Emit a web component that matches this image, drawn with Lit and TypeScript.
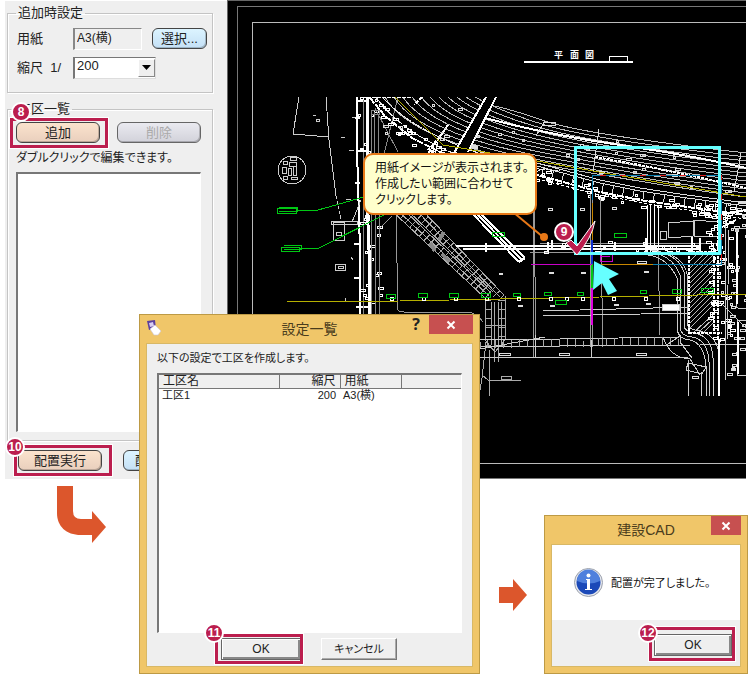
import { LitElement, html, svg, css } from "lit";
import { customElement, property } from "lit/decorators.js";

type Pt = [number, number];

const line = (pts: Pt[]) => "M" + pts.map((p) => p.join(" ")).join("L");

/** Point on a polyline at fraction t of its length, with its normal. */
const along = (pts: Pt[], t: number) => {
  const lens = pts.slice(1).map((p, i) => Math.hypot(p[0] - pts[i][0], p[1] - pts[i][1]));
  let d = t * lens.reduce((a, b) => a + b, 0);
  let i = 0;
  while (i < lens.length - 1 && d > lens[i]) d -= lens[i++];
  const [a, b] = [pts[i], pts[i + 1]];
  const ux = (b[0] - a[0]) / lens[i];
  const uy = (b[1] - a[1]) / lens[i];
  return { x: a[0] + ux * d, y: a[1] + uy * d, nx: -uy, ny: ux };
};

/** Ticks drawn at a right angle to a polyline. */
const ticks = (pts: Pt[], n: number, from: number, to: number) => {
  let d = "";
  for (let i = 0; i <= n; i++) {
    const p = along(pts, i / n);
    d += `M${(p.x + p.nx * from).toFixed(1)} ${(p.y + p.ny * from).toFixed(1)}L${(p.x + p.nx * to).toFixed(1)} ${(p.y + p.ny * to).toFixed(1)}`;
  }
  return d;
};

let seed = 7;
const rand = () => (seed = (seed * 16807) % 2147483647) / 2147483647;

/** Small survey marks scattered beside a polyline. */
const marks = (pts: Pt[], n: number, spread: number) => {
  let d = "";
  for (let i = 0; i < n; i++) {
    const p = along(pts, rand());
    const o = (rand() - 0.5) * spread;
    const x = Math.round(p.x + p.nx * o);
    const y = Math.round(p.y + p.ny * o);
    const w = 2 + Math.floor(rand() * 4);
    d += `M${x} ${y}h${w}v2h${-w}z`;
  }
  return d;
};

const boxes = (list: number[][]) => list.map(([x, y, w, h]) => `M${x} ${y}h${w}v${h}h${-w}z`).join("");

const upper = Array.from({ length: 12 }, (_, i) => {
  const sx = 484 - i * 9;
  return `M${sx} ${i ? 97 : 104}Q${sx + 24} ${108 + i * 3} 545 ${121 + i * 4}T746 ${153 + i * 4}`;
}).join("");
const mainRoad: Pt[] = [[370, 98], [385, 116], [412, 138], [440, 152], [480, 164], [537, 175], [600, 192], [640, 200], [680, 206], [746, 215]];
const diagA: Pt[] = [[391, 210], [485, 298]];
const diagB: Pt[] = [[420, 208], [504, 295]];
const bottomRoad: Pt[] = [[480, 340], [560, 339], [678, 337]];
const spine: Pt[] = [[369, 97], [369, 314]];
const hatchRight: Pt[] = [[717, 210], [719, 340]];
const greens = [
  [386, 294, 9, 4], [418, 293, 9, 4], [449, 293, 9, 4], [481, 293, 9, 4], [513, 293, 7, 3], [544, 292, 7, 3],
  [577, 292, 6, 3], [640, 290, 6, 3], [672, 289, 9, 4], [701, 288, 12, 4], [555, 300, 11, 4], [614, 233, 12, 4], [492, 232, 12, 4],
];
const posts = [392, 424, 456, 487, 519, 551, 567, 583, 614, 646, 678];

const cadDrawing = svg`
  <g fill="none" stroke="#fff" shape-rendering="crispEdges">
    <path stroke="#777" d="M746 6H237V478H746" />
    <path stroke="#bbb" d="M746 22H252V463H746" />
    <path stroke-width="2" d="M524 62H633" />
    <path d="M609 56h18v5h-18z" />
  </g>
  <text x="554" y="58" fill="#fff" class="plan">平</text>
  <text x="570" y="58" fill="#fff" class="plan">面</text>
  <text x="585" y="58" fill="#fff" class="plan">図</text>
  <clipPath id="plan-area"><rect x="270" y="97" width="476" height="300" /></clipPath>
  <g clip-path="url(#plan-area)" fill="none" stroke="#ccc" stroke-width="1" shape-rendering="crispEdges">
    <path d="M299 97L293 134L329 137M326 97L329 140L336 196" />
    <path d="M336 196L341 219" stroke-dasharray="3 2" />
    <circle cx="292" cy="170" r="14" />
    <path d=${boxes([[290, 157, 6, 3], [283, 161, 4, 3], [289, 162, 7, 4], [282, 167, 4, 6], [288, 168, 3, 7], [293, 166, 3, 9], [283, 176, 4, 3], [291, 177, 6, 2], [316, 119, 3, 2], [333, 222, 11, 18], [336, 232, 5, 3], [335, 264, 10, 6], [338, 266, 5, 2], [331, 221, 26, 3]])} />
    <path d="M313 115h3M341 137h4M346 199h5M351 257l2 3M345 298v3M352 117h5M349 150h5" />
    <g stroke="#fff">
      <path stroke-width="2" d="M357 97V150L360 250V314" />
      <path stroke-width="3" d="M367 97V200L369 250V314" />
      <path d="M357 101H368M355 183h5M354 244h5M354 278h5M356 307h12M357 151H367M355 118h5" stroke-width="2" />
      <path d="M363 97V314" stroke="#888" />
      <path d=${marks(spine, 38, 22)} />
    </g>
    <path stroke="#888" d="M371 110V314M374 110L376 314M378 112L380 314M375 108L398 152M384 154L398 97M371 110h8v4h-8" />
    <path d="M380 228L392 216M396 214L398 310Q399 312 404 312H466Q476 312 483 322" stroke="#999" />
    <path d="M352 222L361 200" />
    <path stroke="#bbb" d=${upper} />
    <path stroke="#fff" stroke-width="2" d="M485 118Q545 134 620 145T746 168" />
    <path stroke="#fff" stroke-width="2" stroke-dasharray="3 1" d="M595 157Q660 168 746 188" />
    <path stroke="#ddd" d="M599 129L593 172M741 153L734 192M545 121L536 136M544 122h11v3h-12z" />
    <path stroke="#fff" stroke-width="2" d="M411 97L360 97M448 125L425 158M440 137L428 150M422 97L414 105" stroke-dasharray="4 1" />
    <path d="M376 97Q400 132 460 156T540 170M382 97Q410 128 470 150T560 170" stroke="#eee" stroke-dasharray="12 1" />
    <path stroke="#000" stroke-width="11" d="M492 96L460 155" />
    <path stroke="#fff" stroke-width="2" d="M486 97L454 153M496 97L468 152" />
    <path stroke="#fff" stroke-width="2" d=${line(mainRoad)} stroke-dasharray="7 1" />
    <path stroke="#ddd" transform="translate(0 -9)" d=${line(mainRoad.slice(4))} />
    <path stroke="#ddd" transform="translate(0 -12)" d=${line(mainRoad.slice(4))} />
    <path stroke="#fff" stroke-dasharray="3 2" d=${line([[537, 179], [600, 195], [660, 206], [746, 219]])} />
    <path stroke="#ddd" d=${ticks(mainRoad.slice(4), 26, -9, -1)} />
    <path stroke="#fff" d=${marks(mainRoad, 95, 13)} />
    <path stroke="#ddd" d=${marks([[385, 112], [470, 130], [600, 152], [740, 185]], 34, 40)} />
    <path d="M590 194V347M592 194V347M600 197L603 347M534 195L536 357M533 195V357M658 245L660 335" stroke="#999" />
    <g stroke="#aaa">
      <path d=${line(diagA)} /><path d=${line(diagB)} />
      <path d="M395 208L489 296M416 210L500 297M404 210L490 292M407 210L493 292" />
      <path d=${ticks(diagA, 20, -9, 0)} />
      <path d=${ticks(diagB, 20, 0, 9)} />
      <path d="M442 254l8 8M430 243l5 8M444 232l-5 8" stroke-width="4" stroke="#888" />
      <path d="M485 298V340L495 352L505 340V296M491 302V345M494 302V362M498 302V362M501 302V345M485 325h20" />
      <path d=${ticks([[485, 300], [485, 345]], 5, -6, 0)} />
      <path d=${ticks([[505, 300], [505, 345]], 5, 0, 6)} />
      <path d="M486 342L482 378L480 390M489 350V396M482 375L488 380H521M501 376h10v3h-10z" />
    </g>
    <g stroke="#fff">
      <path stroke-width="2" d="M468 209L519 262M476 209L525 258M519 262L525 258M472 209L522 260" />
      <path stroke-width="2" d="M456 246H700M463 249H700" />
      <path stroke="#999" d="M540 243H720M530 252H700" />
      <path stroke-width="2" d="M486 243v9M548 242v9M552 240v10M615 242v9M646 238v14M692 236v18M700 238v16" />
      <path d=${marks([[540, 247], [720, 245]], 30, 12)} />
    </g>
    <path d="M543 311L690 307M543 316L690 313M480 347L560 346L690 345M480 357H688M480 349L545 337" stroke="#ccc" />
    <path d=${line(bottomRoad)} />
    <path d=${ticks(bottomRoad, 25, 0, 8)} stroke="#aaa" />
    <path d="M663 337Q670 358 690 359L700 375M665 346L680 336V342L692 358M688 360V396M701 372V396M535 335V357M591 340V357M688 363l18 4-4 7-16-4z" />
    <g stroke="#ccc">
      <path d="M648 252Q672 254 680 275V328Q681 336 692 337Q708 340 709 362V396" />
      <path d="M648 255Q668 258 677 278V330Q679 339 690 340Q704 343 706 366V396" />
      <path d="M650 250Q678 253 684 272V326Q685 332 695 333Q712 337 713 358V396" />
      <path d="M664 252Q684 258 687 274V325Q690 330 700 331Q718 336 719 356V396" />
      <path d="M647 205V252M650 205V252M654 204V250M658 205V250" stroke="#fff" />
    </g>
    <path d="M668 223L693 221V236L669 238zM694 220L718 222V237L694 236zM660 231h6v8h-6z" />
    <path stroke="#fff" stroke-width="2" stroke-dasharray="3 1" d="M689 252V334M714 248V334M689 333H722M688 252H714M718 200V340" />
    <path stroke="#bbb" d="M690 268L706 252M690 278L713 255M690 288L713 265M690 298L713 275M690 308L713 285M690 318L713 295M690 328L713 305M694 332L713 315M704 332L713 323M690 261L700 251M690 273L711 252M690 283L713 260M690 293L713 270M690 303L713 280M690 313L713 290M690 323L713 300M699 332L713 319" />
    <path stroke="#fff" d=${marks(hatchRight, 62, 26)} />
    <path stroke="#ddd" d=${marks([[730, 200], [738, 378]], 42, 28)} />
    <path stroke="#ccc" d="M725 222V380M729 230L727 340M746 228H742Q736 228 736 234V306Q736 309 746 309M746 320H737V375H746M718 300L746 328M700 344H746" />
    <path stroke="#fff" stroke-width="2" d="M737 232V304M738 322V374M720 214L746 210M720 228L736 220M719 340V396" />
    <path fill="#fff" d="M662 304h17v6h-17z" />
    <path stroke="#ddd" d=${boxes([[499, 353, 11, 2], [559, 353, 10, 2], [636, 353, 10, 2], [692, 376, 6, 2], [637, 261, 9, 2], [580, 208, 4, 2], [612, 207, 4, 2], [548, 208, 4, 2], [499, 273, 3, 1], [549, 272, 4, 1], [581, 272, 4, 1], [644, 271, 4, 1], [518, 305, 4, 1], [550, 305, 4, 1], [614, 304, 4, 1], [646, 303, 4, 1]])} />
  </g>
  <g fill="none" stroke-width="1" shape-rendering="crispEdges">
    <path stroke="#b5b000" d="M287 302L400 301L600 297L746 294" />
    <path stroke="#b5b000" d="M395 97L443 145L537 161L610 174L746 197" />
    <g stroke="#fff">${posts.map((x) => svg`<circle cx=${x} cy="299" r="2" />`)}</g>
    <g stroke="#00c814">
      <path d="M277 208h19v5h-19zM279 207h18v4h-18M281 247h18v4h-18zM284 245h17v4h-17M296 211L318 210L364 197M300 248L319 248L386 214" />
      <path d=${boxes(greens)} />
      <path d="M592 264V290" stroke-width="2" />
    </g>
    <path stroke="#c800c8" d="M531 264H592M600 254h12v7h-12zM600 256h10" />
    <path stroke="#e000e0" stroke-width="2" d="M592 288V325" />
    <path stroke="#0a7fb0" d="M592 175H721V264H653M592 175V200" />
    <path stroke="#e02020" stroke-dasharray="6 14" d="M600 175H721V264" />
    <path stroke="#c88600" d="M601 264H653M592 203V240" />
    <path stroke="#1030d0" d="M592 240V264" stroke-width="2" />
    <path stroke="#66ffff" stroke-width="3" d="M575 147H719V253H575z" />
  </g>
  <path fill="#66ffff" d="M594 261L619 274L609 279L617 291L608 295L602 283L593 290z" />
  <path fill="#bb1e4e" stroke="#fff" stroke-width="1" d="M566 243L571 240L577 246L595 221Q592 238 577 255z" />
`;

@customElement("step-badge")
export class StepBadge extends LitElement {
  @property() n = "";
  static styles = css`
    :host {
      box-sizing: border-box;
      display: flex;
      align-items: center;
      justify-content: center;
      width: 20px;
      height: 20px;
      border: 2px solid #fff;
      border-radius: 50%;
      background: #bb1e4e;
      color: #fff;
      font: bold 12px/16px "Liberation Sans", sans-serif;
    }
  `;
  render() {
    return html`${this.n}`;
  }
}

@customElement("app-root")
export class AppRoot extends LitElement {
  static styles = css`
    :host {
      display: block;
      background: #fff;
      color: #222;
      font: 12px/16px "Liberation Sans", "Noto Sans CJK JP", sans-serif;
      font-feature-settings: "palt";
    }
    * {
      box-sizing: border-box;
    }
    button,
    select,
    input {
      font: inherit;
      font-feature-settings: inherit;
      color: inherit;
      margin: 0;
    }
    .stage {
      position: relative;
      min-height: 674px;
      overflow: hidden;
    }
    .app {
      display: flex;
      padding: 0 2px 0 5px;
    }
    .side {
      flex: none;
      width: 222px;
      margin-top: 1px;
      padding: 4px 14px 8px 2px;
      background: #efefef;
    }
    fieldset {
      margin: 0;
      border: 1px solid #c4c4c4;
      box-shadow: inset 1px 1px #fff, 1px 1px #fff;
      padding: 0 8px;
      min-width: 0;
    }
    legend {
      margin: 0;
      padding: 0 2px;
      font-size: 13px;
    }
    .setup {
      padding-bottom: 10px;
    }
    .row {
      display: grid;
      grid-template-columns: 56px 83px;
      align-items: center;
      height: 29px;
      padding-left: 1px;
      font-size: 13px;
    }
    .row.paper {
      grid-template-columns: 56px 69px 54px;
      justify-content: start;
      margin-top: 3px;
    }
    .row.paper button {
      margin-left: 10px;
      width: 55px;
    }
    .field {
      height: 22px;
      width: 100%;
      border: 1px solid;
      border-color: #888 #fff #fff #888;
      border-left-width: 2px;
      background: #efefef;
      padding: 0 2px 4px;
      font-size: 12px;
    }
    .combo {
      position: relative;
    }
    .combo select {
      appearance: none;
      display: block;
      width: 100%;
      height: 22px;
      padding: 0 2px 3px;
      border: 1px solid;
      border-color: #777 #ddd #ddd #777;
      border-left-width: 2px;
      border-radius: 0;
      background: #fff;
      font-size: 13px;
    }
    .combo .drop {
      position: absolute;
      right: 1px;
      top: 2px;
      width: 17px;
      height: 18px;
      border: 1px solid;
      border-color: #fff #888 #888 #fff;
      background: #efefef;
      pointer-events: none;
      display: grid;
      place-items: center;
    }
    .pill {
      height: 21px;
      border: 1px solid #444;
      border-radius: 6px;
      padding: 0 4px;
      font-size: 13px;
      line-height: 18px;
      box-shadow: inset -1px -1px #0003;
      white-space: nowrap;
    }
    .blue {
      background: linear-gradient(#dcf4ff, #c4e0f6);
    }
    .tan {
      background: linear-gradient(#fbe3cd, #e9cfbd);
    }
    .off {
      background: linear-gradient(#eaeaf0, #d2d2da);
      color: #aaa;
      border-color: #666;
    }
    .sites {
      margin-top: 8px;
      padding-bottom: 8px;
    }
    .pair {
      display: flex;
      gap: 17px;
      margin-top: 5px;
    }
    .pair .pill {
      width: 100%;
      flex: none;
    }
    .cell {
      position: relative;
      width: 84px;
      flex: none;
    }
    .mark {
      position: absolute;
      border: 3px solid #bb1e4e;
      outline: 1px solid #fff;
      pointer-events: none;
    }
    .mark step-badge {
      position: absolute;
      left: -14px;
      top: -14px;
    }
    .add .mark {
      inset: -4px -8px -5px -6px;
    }
    .add step-badge {
      left: -2px;
      top: -19px;
    }
    .go .mark {
      inset: -5px -10px -5px -4px;
    }
    .go step-badge {
      left: -12px;
      top: -11px;
    }
    .note {
      margin: 7px 0 6px;
    }
    .list {
      height: 260px;
      width: 185px;
      border: 1px solid;
      border-color: #777 #fff #fff #777;
      border-width: 2px 1px 1px 2px;
      background: #fff;
    }
    .actions {
      display: flex;
      gap: 21px;
      padding: 4px 0 0 11px;
    }
    .actions .blue {
      padding-left: 11px;
      text-align: left;
    }
    .cad {
      position: relative;
      flex: 1;
      min-width: 0;
      background: #000;
      border: solid #666;
      border-width: 1px 0 0 1px;
      overflow: hidden;
    }
    .cad svg {
      position: absolute;
      left: -1px;
      top: -1px;
      width: 519px;
      height: 479px;
    }
    .plan {
      font: bold 9px "Noto Sans CJK JP", sans-serif;
    }
    .callout {
      position: absolute;
      left: 135px;
      top: 152px;
      width: 174px;
      padding: 5px 0 5px 10px;
      border: 2px solid #e87817;
      border-radius: 10px;
      background: #ffffcc;
      color: #111;
      line-height: 16px;
      white-space: nowrap;
    }
    .nine {
      position: absolute;
      left: 326px;
      top: 221px;
    }
    .arrow {
      position: absolute;
      fill: #dc562c;
    }
    .turn {
      left: 57px;
      top: 486px;
    }
    .next {
      left: 499px;
      top: 579px;
    }
    .win {
      position: absolute;
      display: flex;
      flex-direction: column;
      border: 1px solid #bd9a45;
      background: #f0c669;
      padding: 0 6px 6px;
    }
    .bar {
      position: relative;
      flex: none;
      height: 28px;
      display: flex;
      align-items: center;
      justify-content: center;
      font-size: 14px;
      color: #4a3c1c;
    }
    .bar h2 {
      margin: 0;
      font: inherit;
    }
    .bar .icon {
      position: absolute;
      left: 1px;
      top: 5px;
    }
    .ctl {
      position: absolute;
      right: 0;
      top: 0;
      display: flex;
    }
    .ctl button {
      height: 19px;
      border: 0;
      padding: 0;
      background: none;
      display: grid;
      place-items: center;
    }
    .ctl .help {
      width: 26px;
      color: #222;
      font: bold 16px/19px "Open Sans", sans-serif;
    }
    .ctl .close {
      width: 44px;
      background: #c75050;
    }
    .body {
      flex: 1;
      border: 1px solid #d8b866;
      background: #efefef;
    }
    .settings {
      left: 139px;
      top: 314px;
      width: 341px;
      height: 360px;
    }
    .settings .body {
      padding: 6px 10px 0 10px;
    }
    .settings p {
      margin: 0 0 7px;
      font-size: 11px;
    }
    .tablebox {
      height: 260px;
      border: 1px solid #777;
      border-width: 2px 1px 1px 2px;
      border-right-color: #fff;
      border-bottom-color: #fff;
      background: #fff;
    }
    table {
      width: 100%;
      border-collapse: collapse;
      table-layout: fixed;
    }
    th {
      height: 13px;
      padding: 0 4px;
      border: solid #777;
      border-width: 0 1px 1px 0;
      background: #efefef;
      font-weight: normal;
      line-height: 12px;
      text-align: left;
    }
    th:last-child {
      border-right: 0;
    }
    td {
      padding: 0 4px 0 3px;
      font-size: 11px;
      line-height: 13px;
    }
    .num {
      text-align: right;
    }
    .c1 {
      width: 120px;
    }
    .c2 {
      width: 61px;
    }
    .c3 {
      width: 61px;
    }
    .foot {
      display: flex;
      gap: 20px;
      padding: 5px 0 0 64px;
    }
    .foot .cell {
      width: 80px;
    }
    .btn {
      display: block;
      width: 76px;
      height: 22px;
      padding: 0;
      border: 1px solid;
      border-color: #fff #777 #777 #fff;
      box-shadow: inset -1px -1px #aaa;
      background: #efefef;
      font-size: 11px;
    }
    .foot .cell .btn,
    .msgfoot .btn {
      width: 100%;
      border-color: #666;
      box-shadow: inset 1px 1px #fff, inset -2px -2px #888;
      font-size: 12px;
    }
    .foot .mark {
      inset: -4px -2px -4px -6px;
    }
    .message {
      left: 544px;
      top: 515px;
      width: 204px;
      height: 159px;
    }
    .message .ctl .close {
      width: 30px;
    }
    .message .body {
      display: flex;
      flex-direction: column;
      background: #fff;
    }
    .text {
      flex: 1;
      display: flex;
      align-items: center;
      gap: 8px;
      padding-left: 22px;
      color: #111;
      font-size: 11px;
    }
    .msgfoot {
      height: 46px;
      padding: 14px 0 0 102px;
      background: #efefef;
    }
    .msgfoot .cell {
      width: 78px;
    }
    .msgfoot .mark {
      inset: -7px -3px -5px -5px;
    }
    .msgfoot step-badge {
      top: -7px;
    }
  `;

  private closeButton() {
    return html`<button class="close" aria-label="閉じる">
      <svg width="10" height="10" viewBox="0 0 10 10" aria-hidden="true">
        <path d="M1.5 1.5L8.5 8.5M8.5 1.5L1.5 8.5" stroke="#fff" stroke-width="2" />
      </svg>
    </button>`;
  }

  render() {
    return html`
      <div class="stage">
        <main class="app">
          <section class="side">
            <fieldset class="setup">
              <legend>追加時設定</legend>
              <div class="row paper">
                <label for="paper">用紙</label>
                <input id="paper" class="field" readonly .value=${"A3(横)"} />
                <button class="pill blue">選択...</button>
              </div>
              <div class="row">
                <label for="scale">縮尺&nbsp; 1/</label>
                <div class="combo">
                  <select id="scale"><option>200</option></select>
                  <span class="drop"><svg width="9" height="5" viewBox="0 0 9 5" aria-hidden="true"><path d="M0 0H9L4.500 5z" /></svg></span>
                </div>
              </div>
            </fieldset>
            <fieldset class="sites">
              <legend>工区一覧</legend>
              <div class="pair">
                <div class="cell add">
                  <button class="pill tan">追加</button>
                  <div class="mark"><step-badge n="8"></step-badge></div>
                </div>
                <div class="cell"><button class="pill off" disabled>削除</button></div>
              </div>
              <p class="note">ダブルクリックで編集できます。</p>
              <div class="list" role="listbox" aria-label="工区一覧"></div>
            </fieldset>
            <div class="actions pair">
              <div class="cell go">
                <button class="pill tan">配置実行</button>
                <div class="mark"><step-badge n="10"></step-badge></div>
              </div>
              <div class="cell"><button class="pill blue">配置解除</button></div>
            </div>
          </section>
          <section class="cad">
            <svg viewBox="227 0 519 479" role="img" aria-label="平面図">
              ${cadDrawing}
              <path d="M513 212L543 237" stroke="#e87817" stroke-width="2" />
              <circle cx="544" cy="237" r="4" fill="#e87817" />
            </svg>
            <div class="callout">用紙イメージが表示されます。<br />作成したい範囲に合わせて<br />クリックします。</div>
            <step-badge class="nine" n="9"></step-badge>
          </section>
        </main>

        <svg class="arrow turn" width="49" height="57" viewBox="0 0 49 57" aria-hidden="true">
          <path d="M0 0H16V25Q16 33 24 33H35V25L49 41L35 57V49H24C9 49 0 40 0 27z" />
        </svg>
        <svg class="arrow next" width="28" height="32" viewBox="0 0 28 32" aria-hidden="true">
          <path d="M0 8H14V0L28 16L14 32V24H0z" />
        </svg>

        <section class="win settings" role="dialog" aria-label="設定一覧">
          <header class="bar">
            <svg class="icon" width="15" height="16" viewBox="0 0 15 16" aria-hidden="true">
              <path d="M0 1L8 0L9 9L2 10z" fill="#5b3f9e" />
              <path d="M2 3L6 2L7 6L3 7z" fill="#d9cdf2" />
              <path d="M3 9L8 5L14 11L11 15H7z" fill="#fff" stroke="#c9c4d8" stroke-width=".6" />
            </svg>
            <h2>設定一覧</h2>
            <div class="ctl">
              <button class="help" aria-label="ヘルプ">?</button>
              ${this.closeButton()}
            </div>
          </header>
          <div class="body">
            <p>以下の設定で工区を作成します。</p>
            <div class="tablebox">
              <table>
                <thead>
                  <tr><th class="c1">工区名</th><th class="c2 num">縮尺</th><th class="c3">用紙</th><th></th></tr>
                </thead>
                <tbody>
                  <tr><td>工区1</td><td class="num">200</td><td>A3(横)</td><td></td></tr>
                </tbody>
              </table>
            </div>
            <div class="foot">
              <div class="cell">
                <button class="btn">OK</button>
                <div class="mark"><step-badge n="11"></step-badge></div>
              </div>
              <button class="btn">キャンセル</button>
            </div>
          </div>
        </section>

        <section class="win message" role="dialog" aria-label="建設CAD">
          <header class="bar">
            <h2>建設CAD</h2>
            <div class="ctl">${this.closeButton()}</div>
          </header>
          <div class="body">
            <div class="text">
              <svg width="29" height="29" viewBox="0 0 29 29" aria-hidden="true">
                <circle cx="14.500" cy="14.500" r="14" fill="#e6e8ee" stroke="#9aa0ac" stroke-width="1" />
                <circle cx="14.500" cy="14.500" r="12" fill="#1b49b8" />
                <path d="M3 13A11.500 11.500 0 0 1 26 13Q15 18 3 13z" fill="#4f80dd" />
                <circle cx="14.500" cy="7.500" r="2" fill="#fff" />
                <path d="M12 11H16V21H18V22H11V21H13V12H12z" fill="#fff" />
              </svg>
              <span>配置が完了しました。</span>
            </div>
            <div class="msgfoot">
              <div class="cell">
                <button class="btn">OK</button>
                <div class="mark"><step-badge n="12"></step-badge></div>
              </div>
            </div>
          </div>
        </section>
      </div>
    `;
  }
}
